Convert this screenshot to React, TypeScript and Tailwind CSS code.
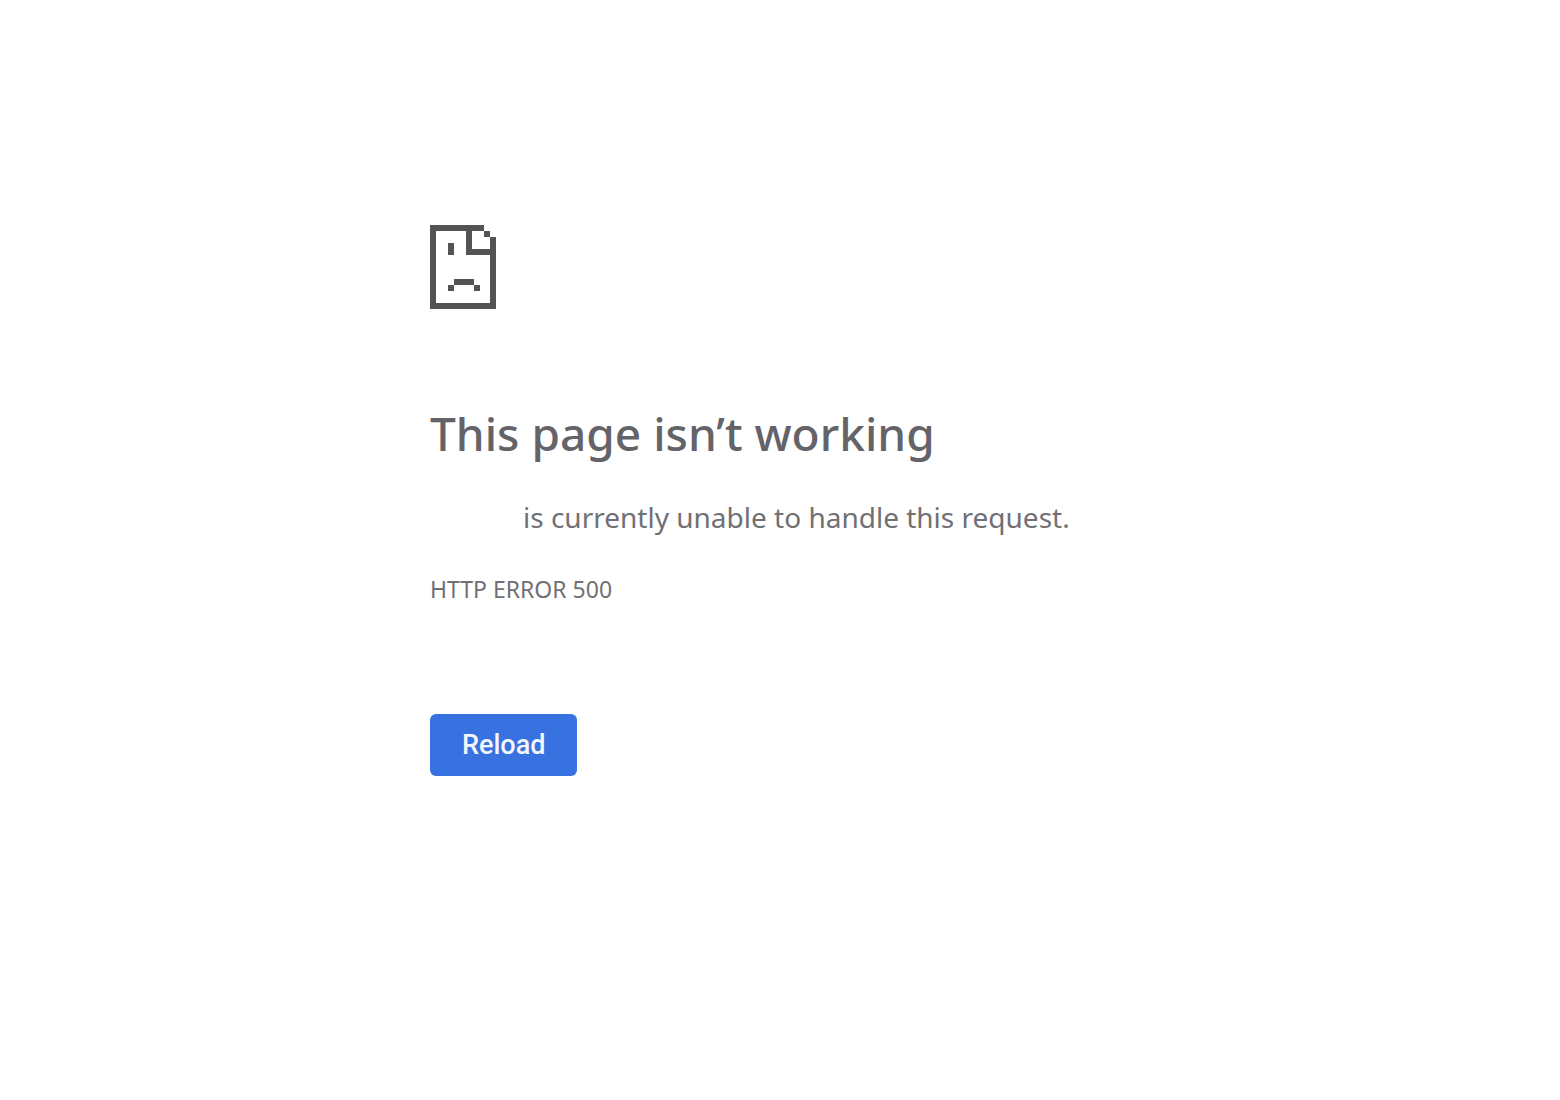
function SadPageIcon() {
  return (
    <svg
      className="h-[84px] w-[66px] text-[#535353]"
      viewBox="0 0 66 84"
      fill="currentColor"
      shapeRendering="crispEdges"
      aria-hidden="true"
    >
      <path
        fillRule="evenodd"
        d="M0 0H54V6H60V12H66V84H0ZM6 6V78H60V30H36V6ZM42 6V24H60V12H54V6Z"
      />
      <path d="M18 18H24V30H18ZM24 54H44V60H24ZM18 60H24V66H18ZM44 60H50V66H44Z" />
    </svg>
  );
}

export default function App() {
  return (
    <main className="min-h-screen bg-white px-6 pt-[225px] font-['Noto_Sans',sans-serif] text-[#707075]">
      <div className="mx-auto w-full max-w-[700px]">
        <SadPageIcon />
        <h1 className="mt-[90px] text-[46px] leading-[68px] font-medium text-[#636368]">
          This page isn’t working
        </h1>
        <p className="mt-8 pl-[93px] text-[28px] leading-9">
          is currently unable to handle this request.
        </p>
        <p className="mt-9 text-[23px] leading-9">HTTP ERROR 500</p>
        <button
          type="button"
          className="mt-[107px] rounded-md bg-[#3871e0] px-8 py-[13px] font-['Roboto',sans-serif] text-[27px] leading-9 font-medium text-[#f3f6fd]"
        >
          Reload
        </button>
      </div>
    </main>
  );
}
